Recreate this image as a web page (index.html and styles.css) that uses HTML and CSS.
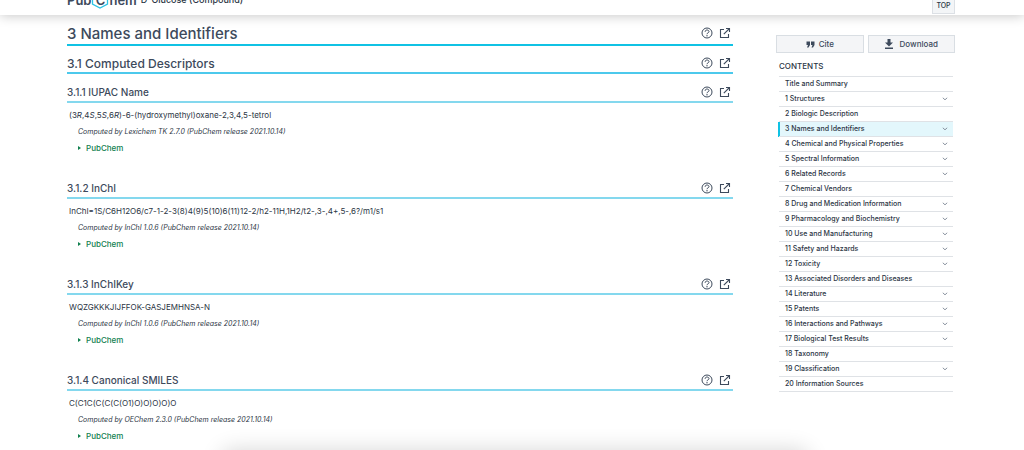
FILE: index.html
```html
<!DOCTYPE html>
<html lang="en">
<head>
<meta charset="utf-8">
<meta name="viewport" content="width=device-width, initial-scale=1">
<title>D-Glucose (Compound) - PubChem</title>
<link rel="stylesheet" href="styles.css">
</head>
<body>
<svg class="sprite" aria-hidden="true">
  <symbol id="help" viewBox="0 0 12 12"><circle cx="6" cy="6" r="5" fill="none" stroke="currentColor" stroke-width="1"/><path d="M4.100 4.800C4.200 3.600 5 3 6 3s2 .6 2 1.600C8 5.800 6 5.800 6 7.200" fill="none" stroke="currentColor" stroke-width="1"/><circle cx="6" cy="8.700" r=".7" fill="currentColor"/></symbol>
  <symbol id="open" viewBox="0 0 12 12"><path d="M5 2.500H1.500v8H9.500V7M7 1.500h3.500V5M10.500 1.500L4.800 7.200" fill="none" stroke="currentColor" stroke-width="1.100"/></symbol>
  <symbol id="chevron" viewBox="0 0 6 4"><path d="M.8.8L3 2.800 5.200.8" fill="none" stroke="currentColor" stroke-width=".9"/></symbol>
</svg>
<header class="topbar">
  <div class="topbar-clip">
    <a class="logo" href="#"><span>Pub</span><span class="hex"><svg viewBox="0 0 18 18" aria-hidden="true"><path d="M9 1l7.500 4v8L9 17l-7.500-4V5z" fill="none" stroke="#2cc3e4" stroke-width="1.300"/></svg><span>C</span></span><span>hem</span></a>
    <span class="compound">D-Glucose (Compound)</span>
    <a class="to-top" href="#"><svg viewBox="0 0 8 8" aria-hidden="true"><path d="M4 0l3 3H5v2h2v2H1V5h2V3H1z" fill="#3d4a5c"/></svg>TOP</a>
  </div>
</header>
<div class="page">
  <main class="main">
    <div class="heading level-1"><h1>3 Names and Identifiers</h1><a href="#" aria-label="Help"><svg><use href="#help"/></svg></a><a href="#" aria-label="Open in new window"><svg><use href="#open"/></svg></a></div>
    <div class="heading level-2"><h2>3.1 Computed Descriptors</h2><a href="#" aria-label="Help"><svg><use href="#help"/></svg></a><a href="#" aria-label="Open in new window"><svg><use href="#open"/></svg></a></div>
    <section class="record">
      <div class="heading level-3"><h3>3.1.1 IUPAC Name</h3><a href="#" aria-label="Help"><svg><use href="#help"/></svg></a><a href="#" aria-label="Open in new window"><svg><use href="#open"/></svg></a></div>
      <p class="value">(3<i>R</i>,4<i>S</i>,5<i>S</i>,6<i>R</i>)-6-(hydroxymethyl)oxane-2,3,4,5-tetrol</p>
      <p class="note">Computed by Lexichem TK 2.7.0 (PubChem release 2021.10.14)</p>
      <a class="source" href="#">PubChem</a>
    </section>
    <section class="record">
      <div class="heading level-3"><h3>3.1.2 InChI</h3><a href="#" aria-label="Help"><svg><use href="#help"/></svg></a><a href="#" aria-label="Open in new window"><svg><use href="#open"/></svg></a></div>
      <p class="value">InChI=1S/C6H12O6/c7-1-2-3(8)4(9)5(10)6(11)12-2/h2-11H,1H2/t2-,3-,4+,5-,6?/m1/s1</p>
      <p class="note">Computed by InChI 1.0.6 (PubChem release 2021.10.14)</p>
      <a class="source" href="#">PubChem</a>
    </section>
    <section class="record">
      <div class="heading level-3"><h3>3.1.3 InChIKey</h3><a href="#" aria-label="Help"><svg><use href="#help"/></svg></a><a href="#" aria-label="Open in new window"><svg><use href="#open"/></svg></a></div>
      <p class="value">WQZGKKKJIJFFOK-GASJEMHNSA-N</p>
      <p class="note">Computed by InChI 1.0.6 (PubChem release 2021.10.14)</p>
      <a class="source" href="#">PubChem</a>
    </section>
    <section class="record">
      <div class="heading level-3"><h3>3.1.4 Canonical SMILES</h3><a href="#" aria-label="Help"><svg><use href="#help"/></svg></a><a href="#" aria-label="Open in new window"><svg><use href="#open"/></svg></a></div>
      <p class="value">C(C1C(C(C(C(O1)O)O)O)O)O</p>
      <p class="note">Computed by OEChem 2.3.0 (PubChem release 2021.10.14)</p>
      <a class="source" href="#">PubChem</a>
    </section>
  </main>
  <aside class="side">
    <div class="actions">
      <button type="button"><svg class="quote" viewBox="0 0 9 7" aria-hidden="true"><path d="M.5.5h3.500v3.500L2.500 6.500H1L2 4H.5zM5 .5h3.500v3.500L7 6.500H5.500L6.500 4H5z" fill="currentColor"/></svg>Cite</button>
      <button type="button"><svg class="down" viewBox="0 0 8 10" aria-hidden="true"><path d="M2.500 0h3v3.500H8L4 7.500 0 3.500h2.500zM0 8.500h8V10H0z" fill="currentColor"/></svg>Download</button>
    </div>
    <nav class="toc" aria-labelledby="toc-title">
      <h2 id="toc-title">CONTENTS</h2>
      <ul>
        <li><a href="#">Title and Summary</a></li>
        <li><a href="#">1 Structures<svg><use href="#chevron"/></svg></a></li>
        <li><a href="#">2 Biologic Description</a></li>
        <li class="current"><a href="#">3 Names and Identifiers<svg><use href="#chevron"/></svg></a></li>
        <li><a href="#">4 Chemical and Physical Properties<svg><use href="#chevron"/></svg></a></li>
        <li><a href="#">5 Spectral Information<svg><use href="#chevron"/></svg></a></li>
        <li><a href="#">6 Related Records<svg><use href="#chevron"/></svg></a></li>
        <li><a href="#">7 Chemical Vendors</a></li>
        <li><a href="#">8 Drug and Medication Information<svg><use href="#chevron"/></svg></a></li>
        <li><a href="#">9 Pharmacology and Biochemistry<svg><use href="#chevron"/></svg></a></li>
        <li><a href="#">10 Use and Manufacturing<svg><use href="#chevron"/></svg></a></li>
        <li><a href="#">11 Safety and Hazards<svg><use href="#chevron"/></svg></a></li>
        <li><a href="#">12 Toxicity<svg><use href="#chevron"/></svg></a></li>
        <li><a href="#">13 Associated Disorders and Diseases</a></li>
        <li><a href="#">14 Literature<svg><use href="#chevron"/></svg></a></li>
        <li><a href="#">15 Patents<svg><use href="#chevron"/></svg></a></li>
        <li><a href="#">16 Interactions and Pathways<svg><use href="#chevron"/></svg></a></li>
        <li><a href="#">17 Biological Test Results<svg><use href="#chevron"/></svg></a></li>
        <li><a href="#">18 Taxonomy</a></li>
        <li><a href="#">19 Classification<svg><use href="#chevron"/></svg></a></li>
        <li><a href="#">20 Information Sources</a></li>
      </ul>
    </nav>
  </aside>
</div>
<div class="tray"></div>
</body>
</html>
```
FILE: styles.css
```css
* { box-sizing: border-box; }

body {
  margin: 0;
  background: #fff;
  color: #2b3544;
  font-family: Inter, "Liberation Sans", sans-serif;
  font-size: 8px;
}

h1, h2, h3, p, ul { margin: 0; padding: 0; }
a { color: inherit; text-decoration: none; }
.sprite { display: none; }

.topbar {
  position: sticky;
  top: 0;
  z-index: 1;
  background: #fff;
  box-shadow: 0 1px 12px rgba(0, 0, 0, .22);
}

.topbar-clip {
  display: flex;
  align-items: flex-end;
  height: 15px;
  padding: 0 69px 0 67px;
  overflow: hidden;
}

.logo {
  display: flex;
  align-items: center;
  height: 30px;
  font-size: 13px;
  font-weight: 600;
  color: #3d4a5c;
}

.hex { display: grid; place-items: center; }
.hex > * { grid-area: 1 / 1; }
.hex svg { width: 18px; height: 18px; }

.compound {
  height: 30px;
  margin-left: 4px;
  font-size: 9px;
  font-weight: 500;
  line-height: 30px;
}

.to-top {
  display: flex;
  flex-direction: column;
  align-items: center;
  gap: 1px;
  width: 23px;
  margin: 0 0 1px auto;
  padding: 2px 0 3px;
  border: 1px solid #dce0e5;
  background: #f3f5f7;
  font-size: 7px;
  font-weight: 500;
  line-height: 8px;
}
.to-top svg { width: 8px; height: 8px; }

.page {
  display: grid;
  grid-template-columns: 1fr 179px;
  gap: 43px;
  padding: 7px 69px 0 67px;
}

.heading {
  display: flex;
  align-items: center;
  gap: 6px;
  color: #3d4a5c;
}
.heading > :first-child { flex: 1; font-weight: 500; }
.heading a { display: flex; }
.heading svg { width: 12px; height: 12px; }
.heading a:last-child { margin-right: 2px; }

.level-1 { height: 24px; border-bottom: 2px solid #10c2e4; }
.level-1 h1 { font-size: 15px; }
.level-2 { height: 20px; margin-top: 8px; border-bottom: 2px solid #4cc9ec; }
.level-2 h2 { font-size: 12px; }
.level-3 { height: 21px; border-bottom: 2px solid #84d8ee; }
.level-3 h3 { font-size: 10px; }

.record { padding: 8px 0 16px; }
.record .value { padding: 6px 2px 0; line-height: 12px; }
.record .note {
  padding: 5px 11px 0;
  font-size: 7px;
  font-style: italic;
  line-height: 12px;
}
.record .source {
  display: flex;
  align-items: center;
  gap: 5px;
  padding: 4px 11px 0;
  color: #11804f;
  font-weight: 500;
  line-height: 12px;
}
.source::before {
  content: "";
  border: solid transparent;
  border-width: 2px 0 2px 3px;
  border-left-color: currentColor;
}

.side { padding-top: 13px; }
.actions { display: grid; grid-template-columns: 1fr 1fr; gap: 4px; }
.actions button {
  display: flex;
  align-items: center;
  justify-content: center;
  gap: 4px;
  height: 18px;
  padding: 0;
  border: 1px solid #d9dee3;
  background: #f4f5f7;
  color: #3d4a5c;
  font: 500 8px Inter, "Liberation Sans", sans-serif;
}
.quote { width: 9px; height: 7px; }
.down { width: 8px; height: 10px; margin-right: 3px; }

.toc { padding: 6px 2px 0 3px; }
.toc h2 { font-size: 8px; font-weight: 500; line-height: 14px; }
.toc ul { margin-top: 3px; border-top: 1px solid #dfe2e6; list-style: none; }
.toc li { border-bottom: 1px solid #dfe2e6; }
.toc a {
  display: flex;
  align-items: center;
  justify-content: space-between;
  padding: 0 5px 0 6px;
  font-size: 7px;
  font-weight: 500;
  line-height: 14px;
}
.toc svg { width: 6px; height: 4px; color: #7d8794; }
.toc .current { background: #e3f7fc; box-shadow: -1px 0 #10c2e4, inset 1px 0 #10c2e4; }

/* Sheet docked just under the window edge; its shadow rises above it. */
.tray {
  position: fixed;
  top: 100%;
  right: 216px;
  left: 222px;
  height: 30px;
  border-radius: 8px;
  box-shadow: 0 0 22px rgba(0, 0, 0, .16);
}
```
